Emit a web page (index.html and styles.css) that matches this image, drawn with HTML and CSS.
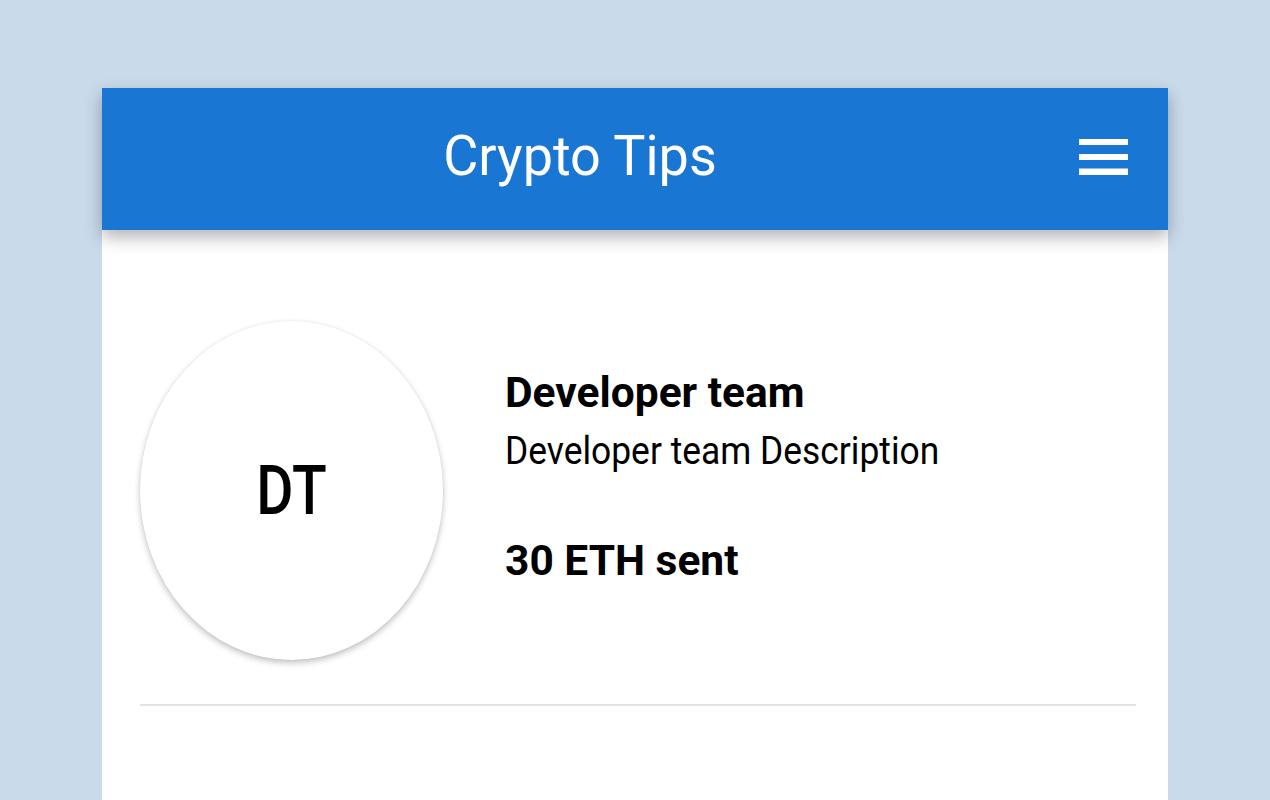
FILE: index.html
```html
<!DOCTYPE html>
<html lang="en">
<head>
<meta charset="utf-8">
<title>Crypto Tips</title>
<link rel="stylesheet" href="styles.css">
</head>
<body>
<div class="card">
  <header class="toolbar">
    <h1 class="title">Crypto Tips</h1>
    <button class="menu" aria-label="Menu">
      <svg width="49" height="37" viewBox="0 0 49 37">
        <rect x="0" y="0" width="49" height="6" fill="#fff"/>
        <rect x="0" y="15" width="49" height="6" fill="#fff"/>
        <rect x="0" y="29.5" width="49" height="6.5" fill="#fff"/>
      </svg>
    </button>
  </header>
  <section class="content">
    <div class="item">
      <div class="avatar"><span class="initials">DT</span></div>
      <div class="info">
        <h2 class="name">Developer team</h2>
        <p class="desc"><span class="desc-text">Developer team Description</span></p>
        <p class="amount">30 ETH sent</p>
      </div>
    </div>
    <hr class="divider">
  </section>
</div>
</body>
</html>
```
FILE: styles.css
```css
html, body {
  margin: 0;
  padding: 0;
}
body {
  background: #c9daeb;
  font-family: Roboto, "Noto Sans", sans-serif;
  color: #000;
  height: 800px;
  overflow: hidden;
}
.card {
  margin: 88px 102px 0 102px;
  background: #fff;
  height: 712px;
}
.toolbar {
  height: 142px;
  background: #1976d2;
  display: flex;
  align-items: center;
  box-shadow: 0 7px 16px rgba(0, 0, 0, 0.3);
}
.title {
  flex: 1;
  margin: 0;
  text-align: center;
  color: #fff;
  font-size: 54px;
  font-weight: 400;
  line-height: 1;
  padding-bottom: 6px;
  transform: scaleY(1.04);
}
.menu {
  background: none;
  border: 0;
  height: 60px;
  display: flex;
  align-items: center;
  padding: 0 40px 0 21px;
  box-sizing: content-box;
  width: 49px;
}
.menu svg { display: block; margin-top: -4px; }
.content {
  padding: 91px 32px 0 38px;
}
.item {
  display: flex;
  align-items: flex-start;
}
.avatar {
  width: 303px;
  height: 339px;
  border-radius: 50%;
  background: #fff;
  box-shadow: 0 3px 6px rgba(0, 0, 0, 0.24), 0 0 2px rgba(0, 0, 0, 0.08);
  display: flex;
  align-items: center;
  justify-content: center;
  flex-shrink: 0;
}
.initials {
  font-size: 57px;
  font-weight: 500;
  line-height: 1;
  display: inline-block;
  transform: scaleY(1.2);
}
.info {
  margin-left: 62px;
  padding-top: 47px;
}
.name {
  margin: 0;
  font-size: 42.5px;
  font-weight: 700;
  line-height: 50px;
}
.desc {
  margin: 11px 0 0 0;
  font-size: 35.4px;
  font-weight: 400;
  line-height: 44px;
}
.desc-text {
  display: inline-block;
  transform: scaleY(1.12);
}
.amount {
  margin: 63px 0 0 0;
  font-size: 42.5px;
  font-weight: 700;
  line-height: 50px;
}
.divider {
  border: 0;
  height: 2px;
  background: #e2e2e2;
  margin: 44px 0 0 0;
}
```
